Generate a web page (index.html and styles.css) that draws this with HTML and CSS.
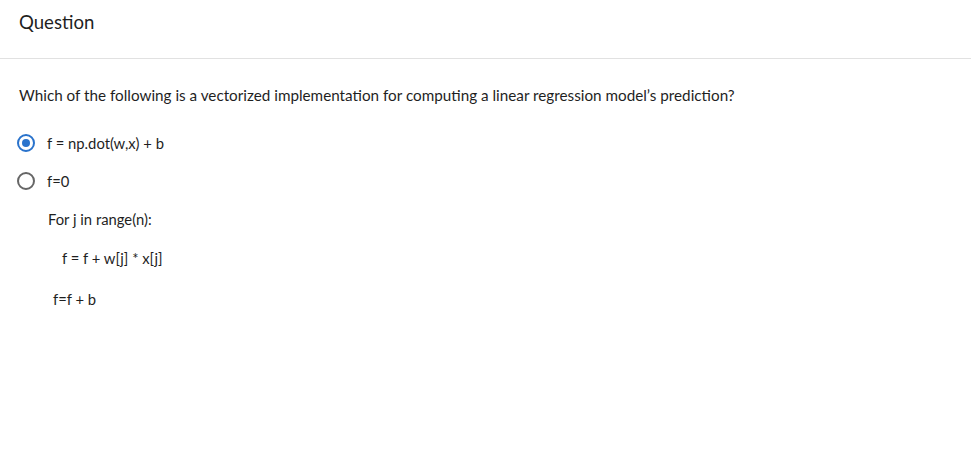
FILE: index.html
```html
<!DOCTYPE html>
<html>
<head>
<meta charset="utf-8">
<link rel="stylesheet" href="styles.css">
</head>
<body>
<div class="page">
  <header class="head">
    <h1 class="title">Question</h1>
  </header>
  <main class="content">
    <p class="question">Which of the following is a vectorized implementation for computing a linear regression model’s prediction?</p>
    <div class="options">
      <label class="option">
        <span class="radio checked"></span>
        <span class="opt-text">f = np.dot(w,x) + b</span>
      </label>
      <label class="option">
        <span class="radio"></span>
        <span class="opt-text">f=0</span>
      </label>
      <div class="code">
        <p class="line l1">For j in range(n):</p>
        <p class="line l2">f = f + w[j] * x[j]</p>
        <p class="line l3">f=f + b</p>
      </div>
    </div>
  </main>
</div>
</body>
</html>
```

FILE: styles.css
```css
* { box-sizing: border-box; }
html, body { margin: 0; padding: 0; background: #fff; }
body {
  font-family: "Lato", "Open Sans", sans-serif;
  color: #1f1f1f;
}
.head {
  height: 59px;
  border-bottom: 1px solid #e1e1e1;
  padding: 10px 19px 0;
}
.title {
  margin: 0;
  font-size: 18.6px;
  font-weight: 400;
  line-height: 24px;
  color: #1f1f1f;
}
.content { padding: 26px 19px 0; }
.question {
  margin: 0;
  font-size: 15.25px;
  line-height: 20px;
}
.options { margin-top: 28px; }
.option {
  display: flex;
  align-items: center;
  height: 20px;
  margin-bottom: 18px;
  font-size: 14.8px;
}
.radio {
  width: 18px;
  height: 18px;
  border-radius: 50%;
  border: 2px solid #666;
  margin-left: -2px;
  margin-right: 12px;
  position: relative;
  flex: none;
}
.radio.checked { border-color: #2a73cc; }
.radio.checked::after {
  content: "";
  position: absolute;
  left: 3px; top: 3px;
  width: 8px; height: 8px;
  border-radius: 50%;
  background: #2a73cc;
}
.code { padding-left: 29px; }
.line {
  margin: 0 0 19px;
  font-size: 14.8px;
  line-height: 20px;
}
.l2 { padding-left: 14px; }
.l3 { padding-left: 5px; margin-top: 21px; }
```
